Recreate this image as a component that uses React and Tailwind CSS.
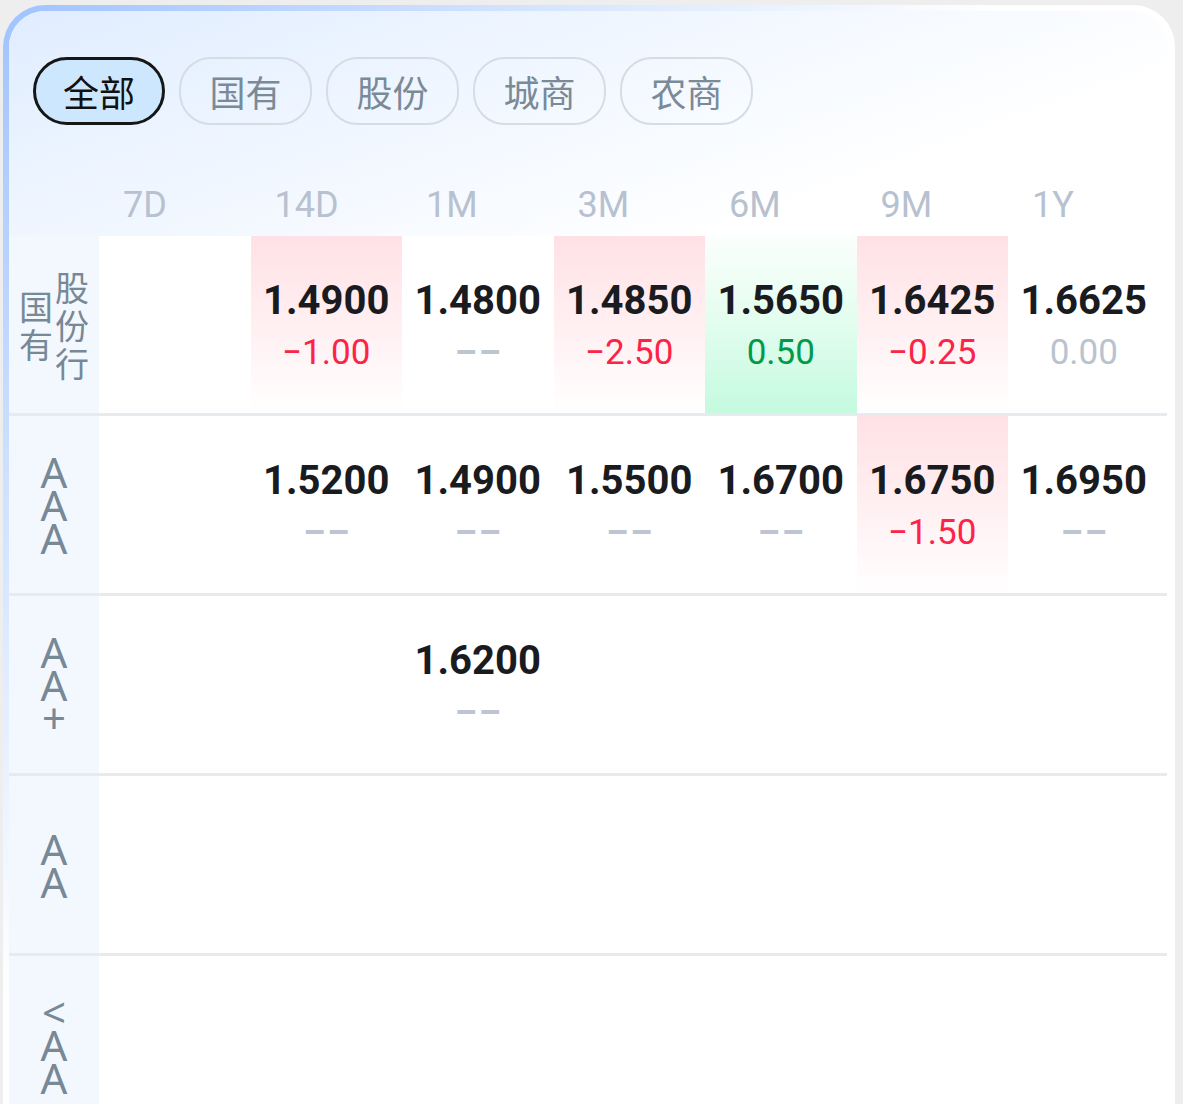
const filters = ['全部', '国有', '股份', '城商', '农商'];
const periods = ['7D', '14D', '1M', '3M', '6M', '9M', '1Y'];

// t: down = red, up = green, flat = grey, none = no change ("––")
const rows = [
  {
    key: 'gyg',
    cells: [
      null,
      { v: '1.4900', c: '−1.00', t: 'down' },
      { v: '1.4800', t: 'none' },
      { v: '1.4850', c: '−2.50', t: 'down' },
      { v: '1.5650', c: '0.50', t: 'up' },
      { v: '1.6425', c: '−0.25', t: 'down' },
      { v: '1.6625', c: '0.00', t: 'flat' },
    ],
  },
  {
    key: 'AAA',
    cells: [
      null,
      { v: '1.5200', t: 'none' },
      { v: '1.4900', t: 'none' },
      { v: '1.5500', t: 'none' },
      { v: '1.6700', t: 'none' },
      { v: '1.6750', c: '−1.50', t: 'down' },
      { v: '1.6950', t: 'none' },
    ],
  },
  {
    key: 'AA+',
    cells: [null, null, { v: '1.6200', t: 'none' }, null, null, null, null],
  },
  { key: 'AA', cells: [null, null, null, null, null, null, null] },
  { key: '<AA', cells: [null, null, null, null, null, null, null] },
];

const cellBg = {
  down: 'bg-[linear-gradient(180deg,#ffe1e5_0%,#fff1f3_55%,#ffffff_100%)]',
  up: 'bg-[linear-gradient(180deg,#fbfffd_0%,#e2fdee_50%,#c5fadf_100%)]',
  flat: 'bg-white',
  none: 'bg-white',
};

const changeColor = {
  down: 'text-[#fb2448]',
  up: 'text-[#03994b]',
  flat: 'text-[#b9c3d0]',
  none: 'text-[#bcc5d1]',
};

function Label({ name }) {
  if (name === 'gyg') {
    return (
      <div className="flex items-center justify-center gap-[2px] text-[34px] leading-[38px] text-[#778896] font-['Noto_Sans_CJK_SC',sans-serif]">
        <div className="flex flex-col">
          <span>国</span>
          <span>有</span>
        </div>
        <div className="flex flex-col">
          <span>股</span>
          <span>份</span>
          <span>行</span>
        </div>
      </div>
    );
  }
  return (
    <div className="flex flex-col items-center text-[42px] leading-[33px] text-[#778896] font-['Noto_Sans',sans-serif]">
      {name.split('').map((ch, i) => (
        <span key={i}>{ch}</span>
      ))}
    </div>
  );
}

function Cell({ cell }) {
  if (!cell) return <div className="bg-white" />;
  return (
    <div className={`flex flex-col items-center justify-center pt-[4px] ${cellBg[cell.t]}`}>
      <span className="text-[40px] leading-[52px] font-bold text-[#1a1b1f]">{cell.v}</span>
      {cell.t === 'none' ? (
        <span className="pl-[2px] text-[35px] leading-[52px] font-bold tracking-[2px] text-[#bcc5d1]">––</span>
      ) : (
        <span className={`text-[35px] leading-[52px] ${changeColor[cell.t]}`}>{cell.c}</span>
      )}
    </div>
  );
}

export default function App() {
  return (
    <div className="w-full h-[1104px] overflow-hidden bg-[#eeeeee] pl-[3px] pr-[8px] pt-[5px] font-['Roboto',sans-serif]">
      <div className="h-full rounded-t-[42px] bg-[linear-gradient(135deg,#a0c3ff_0%,#d5e5ff_24%,#ffffff_44%)] pl-[6px] pr-[6px] pt-[6px]">
        <div className="h-full rounded-t-[36px] bg-white pr-[2px]">
          <div className="rounded-t-[36px] bg-[linear-gradient(160deg,#e0edff_0%,#f1f7ff_40%,#ffffff_75%)]">
            <div className="flex gap-[14px] pl-[24px] pt-[46px]">
              {filters.map((f, i) => (
                <div
                  key={f}
                  className={
                    i === 0
                      ? "flex h-[68px] w-[132px] items-center justify-center rounded-[34px] border-[3px] border-[#161616] bg-[#cde7ff] text-[36px] text-[#111111] font-['Noto_Sans_CJK_SC',sans-serif]"
                      : "flex h-[68px] w-[133px] items-center justify-center rounded-[32px] border-[2px] border-[#d5dce4] text-[36px] text-[#7a8a97] font-['Noto_Sans_CJK_SC',sans-serif]"
                  }
                >
                  {f}
                </div>
              ))}
            </div>
            <div className="grid h-[111px] grid-cols-[90px_repeat(7,151.5px)] items-end pb-[9px]">
              <div />
              {periods.map((p) => (
                <span key={p} className="pl-[24px] text-[36px] leading-[44px] text-[#b7c1cf]">
                  {p}
                </span>
              ))}
            </div>
          </div>
          {rows.map((row) => (
            <div
              key={row.key}
              className="grid h-[180px] grid-cols-[90px_repeat(7,151.5px)] border-b-[3px] border-[#e6ebf0] bg-white"
            >
              <div className="flex items-center justify-center bg-[#f3f8fe]">
                <Label name={row.key} />
              </div>
              {row.cells.map((c, i) => (
                <Cell key={i} cell={c} />
              ))}
            </div>
          ))}
        </div>
      </div>
    </div>
  );
}
